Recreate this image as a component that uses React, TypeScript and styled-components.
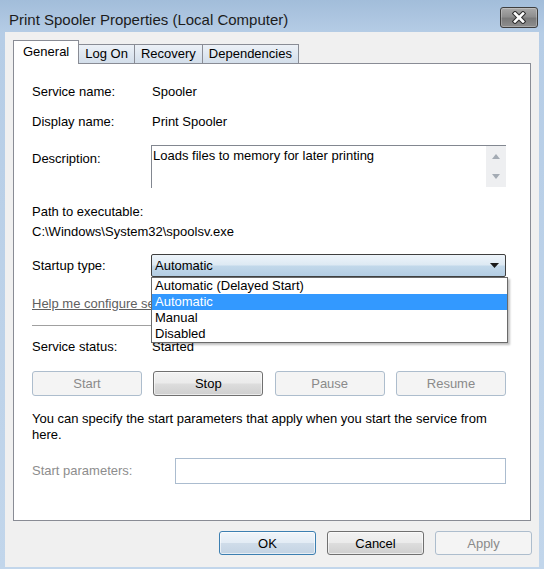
import React from "react";
import styled, { createGlobalStyle } from "styled-components";

const GlobalStyle = createGlobalStyle`
  html, body {
    margin: 0;
    padding: 0;
    background: #ffffff;
  }
`;

export default function App() {
  return (
    <>
      <GlobalStyle />
      <Window>
        <TitleBar>
          <Title>Print Spooler Properties (Local Computer)</Title>
          <CloseButton aria-label="Close">
            <svg width="14" height="13" viewBox="0 0 14 13">
              <path
                d="M3 2.5 L11 10.5 M11 2.5 L3 10.5"
                stroke="#2e2e2e"
                strokeWidth="4.6"
                strokeLinecap="square"
              />
              <path
                d="M3 2.5 L11 10.5 M11 2.5 L3 10.5"
                stroke="#ffffff"
                strokeWidth="2.6"
                strokeLinecap="square"
              />
            </svg>
          </CloseButton>
        </TitleBar>

        <Client>
          <TabStrip>
            <Tab $active>General</Tab>
            <Tab>Log On</Tab>
            <Tab>Recovery</Tab>
            <Tab>Dependencies</Tab>
          </TabStrip>

          <Panel>
            <Field $mt={0}>
              <Label>Service name:</Label>
              <Value>Spooler</Value>
            </Field>
            <Field $mt={14}>
              <Label>Display name:</Label>
              <Value>Print Spooler</Value>
            </Field>
            <Field $mt={15} $alignTop>
              <Label $pt={6}>Description:</Label>
              <DescBox>
                <DescText>Loads files to memory for later printing</DescText>
                <ScrollBar>
                  <ScrollArrow>
                    <svg width="8" height="5" viewBox="0 0 8 5">
                      <path d="M0 5 L4 0 L8 5 Z" fill="#a4abb4" />
                    </svg>
                  </ScrollArrow>
                  <ScrollArrow>
                    <svg width="8" height="5" viewBox="0 0 8 5">
                      <path d="M0 0 L8 0 L4 5 Z" fill="#a4abb4" />
                    </svg>
                  </ScrollArrow>
                </ScrollBar>
              </DescBox>
            </Field>
            <Line $mt={16}>Path to executable:</Line>
            <Line $mt={4}>C:\Windows\System32\spoolsv.exe</Line>

            <Field $mt={14}>
              <Label>Startup type:</Label>
              <ComboWrap>
                <Combo>
                  <ComboText>Automatic</ComboText>
                  <svg width="9" height="5" viewBox="0 0 9 5">
                    <path d="M0 0 L9 0 L4.5 5 Z" fill="#1a1a1a" />
                  </svg>
                </Combo>
                <DropList>
                  <Option>Automatic (Delayed Start)</Option>
                  <Option $selected>Automatic</Option>
                  <Option>Manual</Option>
                  <Option>Disabled</Option>
                </DropList>
              </ComboWrap>
            </Field>

            <HelpLink>Help me configure service startup options.</HelpLink>
            <Separator />

            <Field $mt={13}>
              <Label>Service status:</Label>
              <Value>Started</Value>
            </Field>

            <ButtonRow>
              <Button $w={110} $h={25} disabled>
                Start
              </Button>
              <Button $w={110} $h={25}>
                Stop
              </Button>
              <Button $w={110} $h={25} disabled>
                Pause
              </Button>
              <Button $w={110} $h={25} disabled>
                Resume
              </Button>
            </ButtonRow>

            <Line $mt={15}>
              You can specify the start parameters that apply when you start the
              service from here.
            </Line>

            <Field $mt={15}>
              <Label $w={143} $muted>
                Start parameters:
              </Label>
              <ParamInput />
            </Field>
          </Panel>

          <Footer>
            <Button $w={97} $h={24} $default>
              OK
            </Button>
            <Button $w={97} $h={24}>
              Cancel
            </Button>
            <Button $w={97} $h={24} disabled>
              Apply
            </Button>
          </Footer>
        </Client>
      </Window>
    </>
  );
}

const Window = styled.div`
  width: 544px;
  height: 569px;
  display: flex;
  flex-direction: column;
  box-sizing: border-box;
  background: linear-gradient(180deg, #a2bdda 0px, #b6cde6 34px, #c2d6eb 100%);
  font-family: "Liberation Sans", Arial, sans-serif;
  font-size: 13px;
  color: #000;
`;

const TitleBar = styled.div`
  height: 32px;
  flex-shrink: 0;
  display: flex;
  align-items: flex-start;
  justify-content: space-between;
  padding: 0 6px 0 9px;
`;

const Title = styled.div`
  margin-top: 10px;
  font-size: 15px;
  line-height: 20px;
  color: #1c1c1c;
`;

const CloseButton = styled.div`
  margin-top: 7px;
  width: 38px;
  height: 21px;
  box-sizing: border-box;
  display: flex;
  align-items: center;
  justify-content: center;
  border: 1px solid #3e3e3e;
  border-radius: 3px;
  background: linear-gradient(180deg, #a9a9a9 0%, #8f8f8f 45%, #7a7a7a 55%, #8e8e8e 100%);
  box-shadow: inset 0 0 0 1px rgba(255, 255, 255, 0.25);
`;

const Client = styled.div`
  flex: 1;
  margin: 0 5px 2px;
  background: #f0f0f0;
  display: flex;
  flex-direction: column;
  padding-top: 8px;
`;

const TabStrip = styled.div`
  display: flex;
  align-items: flex-end;
  padding-left: 8px;
  position: relative;
  z-index: 1;
`;

const Tab = styled.div<{ $active?: boolean }>`
  box-sizing: border-box;
  height: ${(p) => (p.$active ? 24 : 19)}px;
  line-height: ${(p) => (p.$active ? 22 : 17)}px;
  padding: 0 ${(p) => (p.$active ? 9 : 6)}px;
  margin-bottom: ${(p) => (p.$active ? -1 : 0)}px;
  border: 1px solid #898c95;
  border-bottom: none;
  background: ${(p) =>
    p.$active ? "#ffffff" : "linear-gradient(180deg, #ecf1f7 0%, #d3deea 100%)"};
  position: relative;
  z-index: ${(p) => (p.$active ? 2 : 1)};
  & + & {
    margin-left: -1px;
  }
`;

const Panel = styled.div`
  flex: 1;
  margin: 0 8px;
  border: 1px solid #898c95;
  background: #ffffff;
  padding: 20px 24px 0 18px;
  display: flex;
  flex-direction: column;
`;

const Field = styled.div<{ $mt: number; $alignTop?: boolean }>`
  display: flex;
  align-items: ${(p) => (p.$alignTop ? "flex-start" : "center")};
  margin-top: ${(p) => p.$mt}px;
  line-height: 16px;
`;

const Label = styled.div<{ $w?: number; $pt?: number; $muted?: boolean }>`
  width: ${(p) => p.$w ?? 119}px;
  flex-shrink: 0;
  padding-top: ${(p) => p.$pt ?? 0}px;
  color: ${(p) => (p.$muted ? "#8d8d8d" : "#000")};
`;

const Value = styled.div`
  padding-left: 1px;
`;

const Line = styled.div<{ $mt: number }>`
  margin-top: ${(p) => p.$mt}px;
  line-height: 16px;
`;

const DescBox = styled.div`
  width: 355px;
  height: 43px;
  box-sizing: border-box;
  display: flex;
  border-top: 1px solid #828790;
  border-left: 1px solid #828790;
`;

const DescText = styled.div`
  flex: 1;
  padding: 2px 1px;
  line-height: 16px;
`;

const ScrollBar = styled.div`
  width: 20px;
  height: 41px;
  background: #eeeff1;
  display: flex;
  flex-direction: column;
`;

const ScrollArrow = styled.div`
  flex: 1;
  display: flex;
  align-items: center;
  justify-content: center;
`;

const ComboWrap = styled.div`
  position: relative;
  width: 356px;
  height: 23px;
`;

const Combo = styled.div`
  height: 100%;
  box-sizing: border-box;
  display: flex;
  align-items: center;
  justify-content: space-between;
  padding: 0 6px 0 3px;
  border: 1px solid #3f3f3f;
  border-radius: 2px;
  background: linear-gradient(
    180deg,
    #edf4fa 0%,
    #dde9f3 48%,
    #c2d8ea 52%,
    #b3cde3 100%
  );
`;

const ComboText = styled.span`
  line-height: 21px;
`;

const DropList = styled.div`
  position: absolute;
  top: 100%;
  left: 0;
  width: 357px;
  box-sizing: border-box;
  border: 1px solid #6a6a6a;
  background: #ffffff;
  box-shadow: 2px 2px 2px rgba(0, 0, 0, 0.25);
  z-index: 5;
`;

const Option = styled.div<{ $selected?: boolean }>`
  height: 16px;
  line-height: 16px;
  padding-left: 3px;
  background: ${(p) => (p.$selected ? "#3399ff" : "transparent")};
  color: ${(p) => (p.$selected ? "#ffffff" : "#000")};
`;

const HelpLink = styled.div`
  margin-top: 19px;
  line-height: 16px;
  color: #5f5f5f;
  text-decoration: underline;
`;

const Separator = styled.div`
  margin-top: 13px;
  height: 1px;
  background: #a0a0a0;
`;

const ButtonRow = styled.div`
  margin-top: 16px;
  display: flex;
  justify-content: space-between;
`;

const Button = styled.button<{ $w: number; $h: number; $default?: boolean }>`
  width: ${(p) => p.$w}px;
  height: ${(p) => p.$h}px;
  box-sizing: border-box;
  padding: 0;
  font-family: inherit;
  font-size: 13px;
  color: #000;
  border: 1px solid ${(p) => (p.$default ? "#3c7fb1" : "#707070")};
  border-radius: 3px;
  background: ${(p) =>
    p.$default
      ? "linear-gradient(180deg, #f0f5fa 0%, #e3ecf5 48%, #cfdce9 52%, #c3d3e3 100%)"
      : "linear-gradient(180deg, #f2f2f2 0%, #ebebeb 48%, #dddddd 52%, #cfcfcf 100%)"};
  box-shadow: inset 0 0 0 1px rgba(255, 255, 255, 0.6);

  &:disabled {
    color: #8a8a8a;
    border-color: #adbdcd;
    background: #f4f4f4;
    box-shadow: none;
  }
`;

const ParamInput = styled.div`
  width: 332px;
  height: 26px;
  box-sizing: border-box;
  border: 1px solid #abbccf;
  background: #ffffff;
`;

const Footer = styled.div`
  display: flex;
  justify-content: flex-end;
  gap: 11px;
  padding: 10px 7px 12px;
`;
